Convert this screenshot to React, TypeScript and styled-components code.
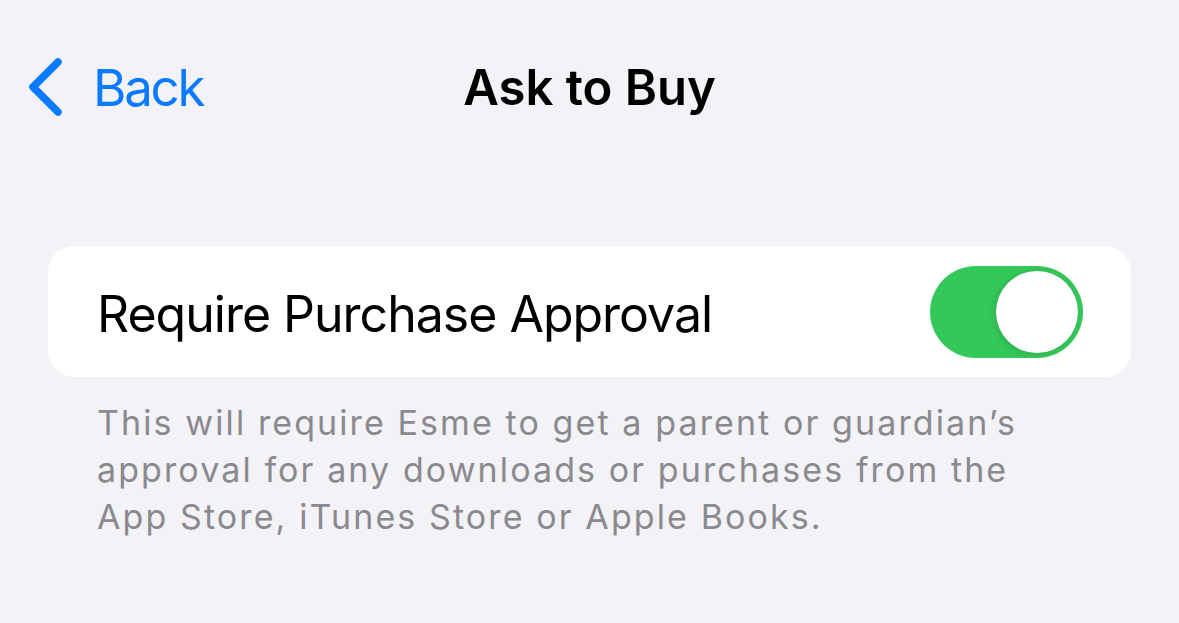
import React from "react";
import styled, { createGlobalStyle } from "styled-components";

const Global = createGlobalStyle`
  html, body { margin: 0; padding: 0; background: #f2f2f7; }
  body { font-family: Inter, "Noto Sans", sans-serif; -webkit-font-smoothing: antialiased; }
`;

const Page = styled.div`
  width: 1179px;
  height: 623px;
  background: #f2f2f7;
  display: flex;
  flex-direction: column;
  overflow: hidden;
`;

const NavBar = styled.div`
  position: relative;
  height: 88px;
  margin-top: 43px;
  display: flex;
  align-items: center;
  justify-content: center;
`;

const BackButton = styled.div`
  position: absolute;
  left: 25px;
  top: 0;
  bottom: 0;
  display: flex;
  align-items: center;
  gap: 28px;
  color: #0a7aff;
  font-size: 51px;
  letter-spacing: -2.2px;
`;

const Title = styled.div`
  font-size: 49px;
  font-weight: 600;
  color: #000;
  letter-spacing: 0px;
`;

const Card = styled.div`
  margin: 115px 48px 0 48px;
  height: 131px;
  background: #fff;
  border-radius: 26px;
  display: flex;
  align-items: center;
  justify-content: space-between;
  padding: 0 48px 0 49px;
`;

const Label = styled.div`
  font-size: 50px;
  color: #000;
  letter-spacing: -1px;
  padding-top: 4px;
`;

const Switch = styled.div<{ on: boolean }>`
  width: 153px;
  height: 92px;
  border-radius: 46px;
  background: ${(p) => (p.on ? "#34c759" : "#e9e9ea")};
  display: flex;
  align-items: center;
  justify-content: ${(p) => (p.on ? "flex-end" : "flex-start")};
  padding: 0 5px;
  box-sizing: border-box;
`;

const Knob = styled.div`
  width: 82px;
  height: 82px;
  border-radius: 50%;
  background: #fff;
  box-shadow: -2px 1px 6px rgba(0, 0, 0, 0.12);
`;

const Footer = styled.div`
  margin: 22px 120px 0 97px;
  font-size: 34px;
  line-height: 47px;
  color: #8a8a8e;
  letter-spacing: 2.1px;
`;

export default function App() {
  return (
    <>
      <Global />
      <Page>
        <NavBar>
          <BackButton>
            <svg width="40" height="62" viewBox="0 0 40 62" fill="none">
              <path d="M33 6 L8 31 L33 56" stroke="#0a7aff" strokeWidth="7.5" strokeLinecap="round" strokeLinejoin="round" />
            </svg>
            <span>Back</span>
          </BackButton>
          <Title>Ask to Buy</Title>
        </NavBar>
        <Card>
          <Label>Require Purchase Approval</Label>
          <Switch on={true}>
            <Knob />
          </Switch>
        </Card>
        <Footer>
          This will require Esme to get a parent or guardian’s approval for any downloads or purchases from the App Store, iTunes Store or Apple Books.
        </Footer>
      </Page>
    </>
  );
}
